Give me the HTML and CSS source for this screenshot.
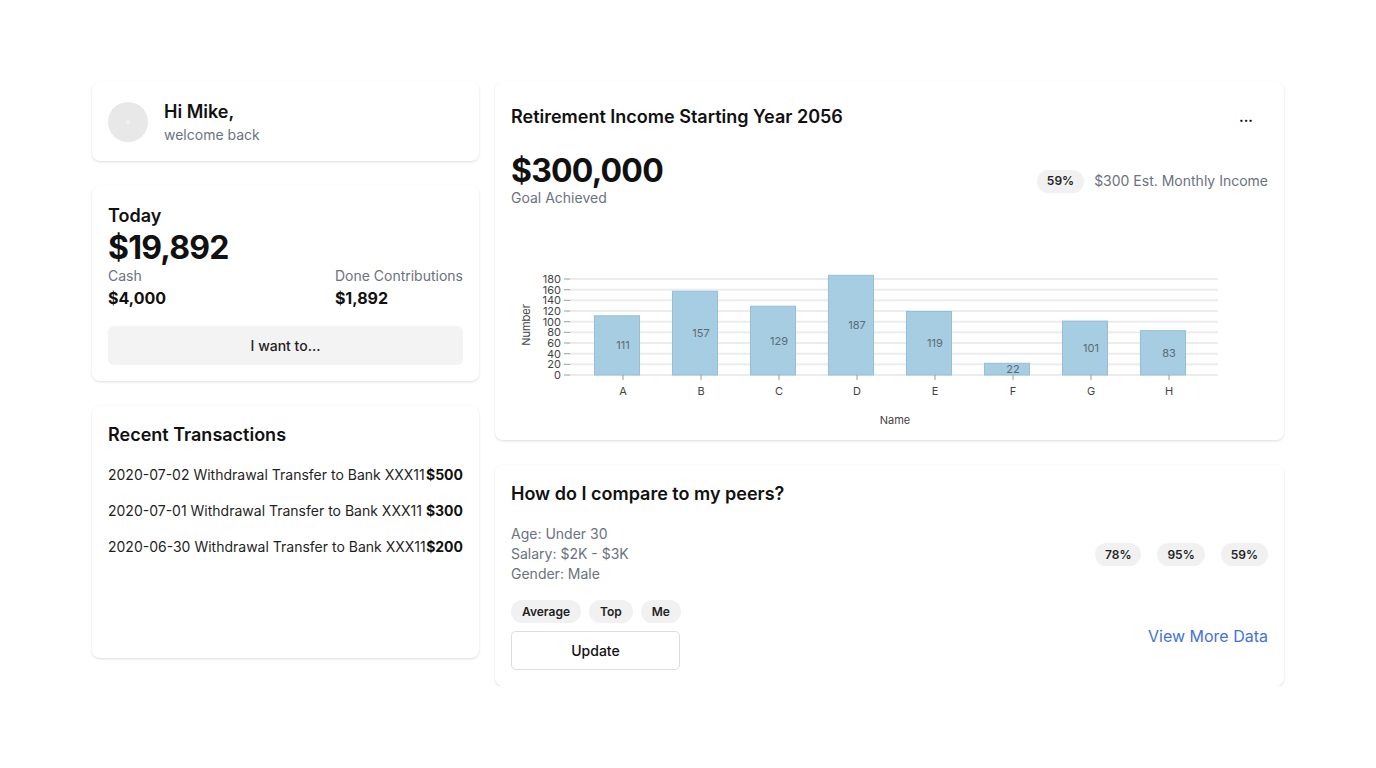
FILE: index.html
```html
<!DOCTYPE html>
<html lang="en">
<head>
<meta charset="utf-8">
<title>Dashboard</title>
<link rel="stylesheet" href="styles.css">
</head>
<body>
<main class="layout">
  <section class="col col-left">
    <div class="card greet">
      <div class="avatar"><span class="avatar-dot"></span></div>
      <div class="greet-text">
        <div class="greet-name">Hi Mike,</div>
        <div class="muted">welcome back</div>
      </div>
    </div>

    <div class="card today">
      <div class="card-title">Today</div>
      <div class="big">$19,892</div>
      <div class="split">
        <div>
          <div class="muted">Cash</div>
          <div class="val">$4,000</div>
        </div>
        <div>
          <div class="muted">Done Contributions</div>
          <div class="val">$1,892</div>
        </div>
      </div>
      <button class="btn-soft">I want to...</button>
    </div>

    <div class="card tx">
      <div class="card-title tx-title">Recent Transactions</div>
      <ul class="tx-list">
        <li class="tx-row"><span>2020-07-02 Withdrawal Transfer to Bank XXX11</span><b>$500</b></li>
        <li class="tx-row"><span>2020-07-01 Withdrawal Transfer to Bank XXX11</span><b>$300</b></li>
        <li class="tx-row"><span>2020-06-30 Withdrawal Transfer to Bank XXX11</span><b>$200</b></li>
      </ul>
    </div>
  </section>

  <section class="col col-right">
    <div class="card retire">
      <div class="retire-head">
        <div class="card-title">Retirement Income Starting Year 2056</div>
        <button class="btn-more">...</button>
      </div>
      <div class="retire-sum">
        <div>
          <div class="big">$300,000</div>
          <div class="muted">Goal Achieved</div>
        </div>
        <div class="est">
          <span class="pill">59%</span>
          <span class="muted">$300 Est. Monthly Income</span>
        </div>
      </div>
      <svg class="chart" width="757" height="204" viewBox="0 0 757 204" xmlns="http://www.w3.org/2000/svg">
        <g class="grid" stroke="#ececec" stroke-width="2">
          <line x1="59" x2="707" y1="151" y2="151"/>
          <line x1="59" x2="707" y1="140.3" y2="140.3"/>
          <line x1="59" x2="707" y1="129.7" y2="129.7"/>
          <line x1="59" x2="707" y1="119" y2="119"/>
          <line x1="59" x2="707" y1="108.3" y2="108.3"/>
          <line x1="59" x2="707" y1="97.7" y2="97.7"/>
          <line x1="59" x2="707" y1="87" y2="87"/>
          <line x1="59" x2="707" y1="76.3" y2="76.3"/>
          <line x1="59" x2="707" y1="65.7" y2="65.7"/>
          <line x1="59" x2="707" y1="55" y2="55"/>
        </g>
        <g stroke="#9a9a9a" stroke-width="1">
          <line x1="53" x2="59" y1="151" y2="151"/>
          <line x1="53" x2="59" y1="140.3" y2="140.3"/>
          <line x1="53" x2="59" y1="129.7" y2="129.7"/>
          <line x1="53" x2="59" y1="119" y2="119"/>
          <line x1="53" x2="59" y1="108.3" y2="108.3"/>
          <line x1="53" x2="59" y1="97.7" y2="97.7"/>
          <line x1="53" x2="59" y1="87" y2="87"/>
          <line x1="53" x2="59" y1="76.3" y2="76.3"/>
          <line x1="53" x2="59" y1="65.7" y2="65.7"/>
          <line x1="53" x2="59" y1="55" y2="55"/>
        </g>
        <g class="ylab" font-size="11" fill="#444" text-anchor="end" dominant-baseline="central">
          <text x="50" y="151">0</text>
          <text x="50" y="140.3">20</text>
          <text x="50" y="129.7">40</text>
          <text x="50" y="119">60</text>
          <text x="50" y="108.3">80</text>
          <text x="50" y="97.7">100</text>
          <text x="50" y="87">120</text>
          <text x="50" y="76.3">140</text>
          <text x="50" y="65.7">160</text>
          <text x="50" y="55">180</text>
        </g>
        <text class="axis-title" x="15" y="101" font-size="11" fill="#444" text-anchor="middle" dominant-baseline="central" transform="rotate(-90 15 101)">Number</text>
        <g class="bars" fill="#a6cde2" stroke="#93bfd8" stroke-width="1">
          <rect x="83.5" y="91.8" width="45" height="59.2"/>
          <rect x="161.5" y="67.3" width="45" height="83.7"/>
          <rect x="239.5" y="82.2" width="45" height="68.8"/>
          <rect x="317.5" y="51.3" width="45" height="99.7"/>
          <rect x="395.5" y="87.5" width="45" height="63.5"/>
          <rect x="473.5" y="139.3" width="45" height="11.7"/>
          <rect x="551.5" y="97.1" width="45" height="53.9"/>
          <rect x="629.5" y="106.7" width="45" height="44.3"/>
        </g>
        <g class="vals" font-size="11" fill="#5e6a74" text-anchor="middle" dominant-baseline="central">
          <text x="112" y="121.4">111</text>
          <text x="190" y="109.2">157</text>
          <text x="268" y="116.6">129</text>
          <text x="346" y="101.2">187</text>
          <text x="424" y="119.3">119</text>
          <text x="502" y="145.2">22</text>
          <text x="580" y="124">101</text>
          <text x="658" y="128.9">83</text>
        </g>
        <g stroke="#9a9a9a" stroke-width="1">
          <line x1="112" x2="112" y1="151" y2="156"/>
          <line x1="190" x2="190" y1="151" y2="156"/>
          <line x1="268" x2="268" y1="151" y2="156"/>
          <line x1="346" x2="346" y1="151" y2="156"/>
          <line x1="424" x2="424" y1="151" y2="156"/>
          <line x1="502" x2="502" y1="151" y2="156"/>
          <line x1="580" x2="580" y1="151" y2="156"/>
          <line x1="658" x2="658" y1="151" y2="156"/>
        </g>
        <g class="xlab" font-size="11" fill="#444" text-anchor="middle" dominant-baseline="central">
          <text x="112" y="167">A</text>
          <text x="190" y="167">B</text>
          <text x="268" y="167">C</text>
          <text x="346" y="167">D</text>
          <text x="424" y="167">E</text>
          <text x="502" y="167">F</text>
          <text x="580" y="167">G</text>
          <text x="658" y="167">H</text>
        </g>
        <text class="axis-title" x="384" y="196" font-size="11" fill="#444" text-anchor="middle" dominant-baseline="central">Name</text>
      </svg>
    </div>

    <div class="card peers">
      <div class="card-title">How do I compare to my peers?</div>
      <div class="peers-body">
        <div class="peers-left">
          <div class="muted info">
            <div>Age: Under 30</div>
            <div>Salary: $2K - $3K</div>
            <div>Gender: Male</div>
          </div>
          <div class="chips">
            <span class="pill pill-wide">Average</span>
            <span class="pill pill-wide">Top</span>
            <span class="pill pill-wide">Me</span>
          </div>
          <button class="btn-outline">Update</button>
        </div>
        <div class="peers-right">
          <div class="chips chips-wide">
            <span class="pill">78%</span>
            <span class="pill">95%</span>
            <span class="pill">59%</span>
          </div>
          <a class="link" href="#">View More Data</a>
        </div>
      </div>
    </div>
  </section>
</main>
</body>
</html>
```

FILE: styles.css
```css
* { box-sizing: border-box; }

html, body {
  margin: 0;
  padding: 0;
  background: #ffffff;
}

body {
  font-family: Inter, "Noto Sans", "Liberation Sans", sans-serif;
  color: #111111;
  font-size: 14px;
  line-height: 20px;
}

.layout {
  display: flex;
  gap: 16px;
  align-items: flex-start;
  padding: 82px 92px 0 92px;
}

.col {
  display: flex;
  flex-direction: column;
  gap: 25px;
}

.col-left { width: 387px; flex: none; }
.col-right { flex: 1; gap: 25px; }

.card {
  background: #ffffff;
  border-radius: 8px;
  box-shadow: 0 1px 3px rgba(0, 0, 0, 0.10), 0 1px 2px rgba(0, 0, 0, 0.04);
  padding: 16px;
}

.card-title {
  font-size: 18px;
  line-height: 26px;
  font-weight: 600;
}

.muted { color: #6b7280; }

/* greeting */
.greet {
  display: flex;
  align-items: center;
  gap: 16px;
}

.greet-text { padding-top: 1px; }

.avatar {
  width: 40px;
  height: 40px;
  border-radius: 50%;
  background: #e8e8e8;
  display: flex;
  align-items: center;
  justify-content: center;
}

.avatar-dot {
  width: 4px;
  height: 4px;
  border-radius: 50%;
  background: #f0f0f0;
}

.greet-name {
  font-size: 18px;
  line-height: 26px;
  font-weight: 600;
}

/* today */
.today .card-title { line-height: 28px; }

.big {
  font-size: 32px;
  line-height: 36px;
  font-weight: 700;
  letter-spacing: -0.025em;
}

.split {
  display: flex;
  justify-content: space-between;
}

.val {
  font-size: 16px;
  line-height: 24px;
  font-weight: 700;
}

.btn-soft {
  margin-top: 16px;
  width: 100%;
  height: 39px;
  border: none;
  border-radius: 6px;
  background: #f3f3f3;
  font-family: inherit;
  font-size: 14px;
  font-weight: 500;
  color: #1f1f1f;
}

/* transactions */
.tx { min-height: 252px; }

.tx-title { margin-bottom: 17px; }

.tx-list {
  list-style: none;
  margin: 0;
  padding: 0;
  display: flex;
  flex-direction: column;
  gap: 16px;
}

.tx-row {
  display: flex;
  justify-content: space-between;
  white-space: nowrap;
  font-size: 14px;
  line-height: 20px;
  color: #1f1f1f;
}

.tx-row b { font-weight: 700; color: #111; }

/* retirement */
.retire { padding-bottom: 12px; }

.retire-head {
  display: flex;
  align-items: center;
  justify-content: space-between;
  height: 37px;
}

.btn-more {
  width: 44px;
  height: 32px;
  border: none;
  background: transparent;
  font-family: inherit;
  font-size: 14px;
  font-weight: 700;
  color: #111;
}

.retire-sum {
  margin-top: 19px;
  display: flex;
  align-items: center;
  justify-content: space-between;
}

.retire-sum .big { line-height: 34px; }

.est {
  display: flex;
  align-items: center;
  gap: 10px;
}

.pill {
  display: inline-flex;
  align-items: center;
  height: 23px;
  padding: 0 10px;
  border-radius: 12px;
  background: #f1f1f1;
  font-size: 12px;
  font-weight: 600;
  color: #1f1f1f;
}

.pill-wide { padding: 0 11px; }

.chart {
  display: block;
  margin-top: 16px;
  font-family: Inter, "Noto Sans", sans-serif;
}

/* peers */
.peers-body {
  margin-top: 17px;
  display: flex;
  justify-content: space-between;
}

.chips {
  display: flex;
  gap: 8px;
  margin-top: 16px;
}

.chips-wide {
  gap: 16px;
  margin-top: 19px;
}

.btn-outline {
  display: block;
  margin-top: 8px;
  width: 169px;
  height: 39px;
  background: #ffffff;
  border: 1px solid #dddddd;
  border-radius: 5px;
  font-family: inherit;
  font-size: 14px;
  font-weight: 500;
  color: #111;
}

.peers-right {
  display: flex;
  flex-direction: column;
  align-items: flex-end;
  justify-content: space-between;
}

.link {
  font-size: 16px;
  line-height: 24px;
  color: #4471da;
  text-decoration: none;
  margin-bottom: 22px;
}
```
